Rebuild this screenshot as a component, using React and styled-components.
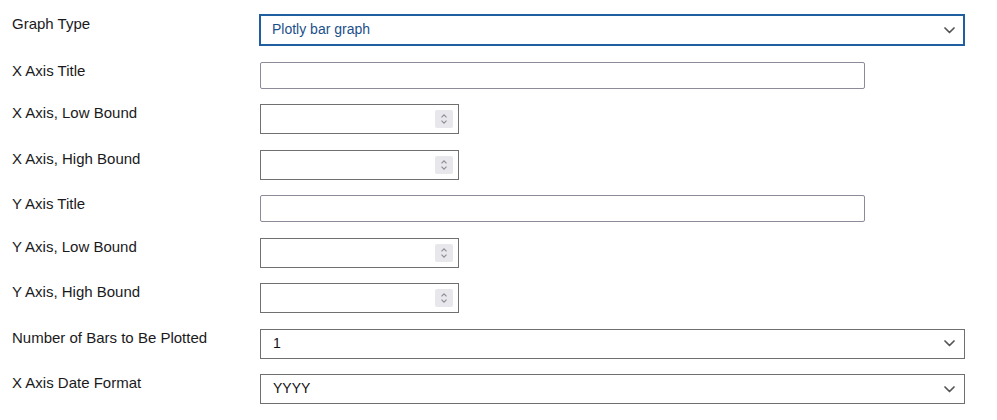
import React from "react";
import styled, { createGlobalStyle } from "styled-components";

const GlobalStyle = createGlobalStyle`
  html, body {
    margin: 0;
    padding: 0;
    background: #ffffff;
    font-family: "Liberation Sans", Arial, Helvetica, sans-serif;
    font-size: 14px;
    color: #1d1d1f;
  }
  * { box-sizing: border-box; }
`;

const Form = styled.form`
  padding: 14px 12px 0 12px;
  display: flex;
  flex-direction: column;
  gap: 15.5px;
`;

const Row = styled.div`
  display: grid;
  grid-template-columns: 248px 1fr;
  align-items: start;
`;

const Label = styled.label`
  font-size: 15px;
  line-height: 18px;
  color: #1a1a1c;
  padding-top: ${(p) => (p.$offset ? "1px" : "0")};
`;

const TextInput = styled.input`
  width: 605px;
  height: 27px;
  border: 1px solid #8d8a9a;
  border-radius: 2px;
  padding: 0 8px;
  font: inherit;
  color: #111;
  background: #fff;
  outline: none;
`;

const NumberBox = styled.div`
  width: 199px;
  height: 30px;
  border: 1px solid #707070;
  display: flex;
  align-items: center;
  padding-right: 5px;
  background: #fff;
`;

const NumberInput = styled.input`
  flex: 1;
  min-width: 0;
  height: 100%;
  border: none;
  outline: none;
  padding: 0 8px;
  font: inherit;
  background: transparent;
  -moz-appearance: textfield;
  &::-webkit-inner-spin-button,
  &::-webkit-outer-spin-button {
    -webkit-appearance: none;
    margin: 0;
  }
`;

const SelectBox = styled.div`
  display: grid;
  align-items: center;
  width: ${(p) => (p.$focused ? "706px" : "705px")};
  height: ${(p) => (p.$focused ? "32px" : "30px")};
  margin-left: ${(p) => (p.$focused ? "-1px" : "0")};
  border: ${(p) => (p.$focused ? "2px solid #1f5fa0" : "1px solid #6f6f6f")};
  background: #fff;

  & > * {
    grid-area: 1 / 1;
  }
`;

const Select = styled.select`
  appearance: none;
  -webkit-appearance: none;
  border: none;
  outline: none;
  background: transparent;
  height: 100%;
  width: 100%;
  padding: 0 30px 2px ${(p) => (p.$focused ? "11px" : "12px")};
  font: inherit;
  font-size: 14px;
  color: ${(p) => (p.$focused ? "#1b4f8a" : "#111")};
`;

const Chevron = styled.svg`
  justify-self: end;
  margin-right: ${(p) => (p.$focused ? "8px" : "9px")};
  pointer-events: none;
`;

const ChevronDown = ({ focused }) => (
  <Chevron $focused={focused} width="11" height="7" viewBox="0 0 11 7">
    <polyline
      points="1,1 5.5,5.5 10,1"
      fill="none"
      stroke="#555"
      strokeWidth="1.7"
      strokeLinecap="round"
      strokeLinejoin="round"
    />
  </Chevron>
);

const Spinner = () => (
  <svg width="18" height="18" viewBox="0 0 18 18">
    <rect width="18" height="18" rx="2" fill="#e8e8ec" />
    <path d="M6.5 7.3 L9 4.8 L11.5 7.3" fill="none" stroke="#8e8e98" strokeWidth="1.2" />
    <path d="M6.5 10.7 L9 13.2 L11.5 10.7" fill="none" stroke="#8e8e98" strokeWidth="1.2" />
  </svg>
);

const SelectField = ({ value, options, focused }) => (
  <SelectBox $focused={focused}>
    <Select $focused={focused} defaultValue={value}>
      {options.map((o) => (
        <option key={o}>{o}</option>
      ))}
    </Select>
    <ChevronDown focused={focused} />
  </SelectBox>
);

const NumberField = () => (
  <NumberBox>
    <NumberInput type="number" />
    <Spinner />
  </NumberBox>
);

export default function App() {
  return (
    <>
      <GlobalStyle />
      <Form>
        <Row>
          <Label $offset>Graph Type</Label>
          <SelectField
            focused
            value="Plotly bar graph"
            options={["Plotly bar graph", "Plotly line graph", "Plotly scatter plot"]}
          />
        </Row>
        <Row>
          <Label>X Axis Title</Label>
          <TextInput type="text" />
        </Row>
        <Row>
          <Label>X Axis, Low Bound</Label>
          <NumberField />
        </Row>
        <Row>
          <Label>X Axis, High Bound</Label>
          <NumberField />
        </Row>
        <Row>
          <Label>Y Axis Title</Label>
          <TextInput type="text" />
        </Row>
        <Row>
          <Label>Y Axis, Low Bound</Label>
          <NumberField />
        </Row>
        <Row>
          <Label>Y Axis, High Bound</Label>
          <NumberField />
        </Row>
        <Row>
          <Label>Number of Bars to Be Plotted</Label>
          <SelectField value="1" options={["1", "2", "3", "4", "5"]} />
        </Row>
        <Row>
          <Label>X Axis Date Format</Label>
          <SelectField value="YYYY" options={["YYYY", "YYYY-MM", "YYYY-MM-DD"]} />
        </Row>
      </Form>
    </>
  );
}
